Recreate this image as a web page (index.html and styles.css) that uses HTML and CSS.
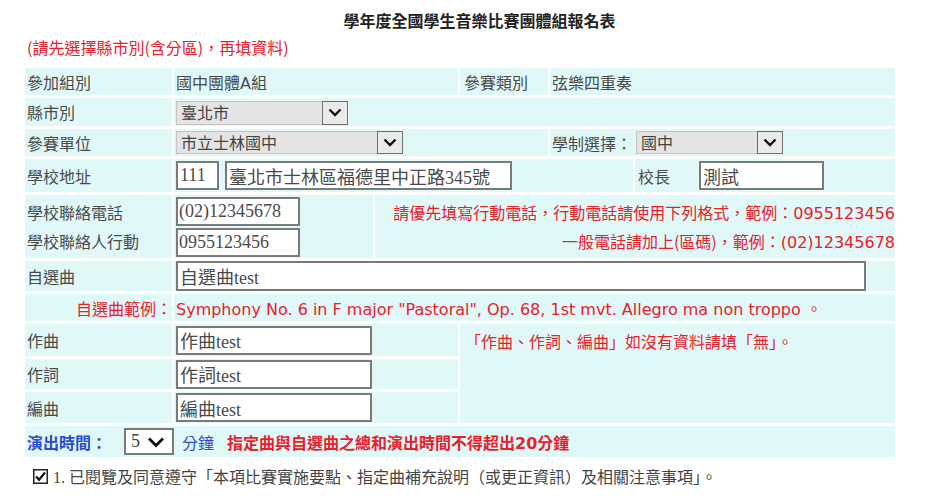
FILE: index.html
```html
<!DOCTYPE html>
<html lang="zh-Hant">
<head>
<meta charset="utf-8">
<title>學年度全國學生音樂比賽團體組報名表</title>
<link rel="stylesheet" href="styles.css">
</head>
<body>
<div class="title">學年度全國學生音樂比賽團體組報名表</div>
<div class="note">(請先選擇縣市別(含分區)，再填資料)</div>

<div class="form">
  <div class="row h27">
    <div class="cell lab">參加組別</div>
    <div class="cell w284">國中團體A組</div>
    <div class="cell w88 pl4">參賽類別</div>
    <div class="cell grow">弦樂四重奏</div>
  </div>

  <div class="row h28">
    <div class="cell lab">縣市別</div>
    <div class="cell grow">
      <span class="sel sel-city"><span class="sel-text">臺北市</span><span class="sel-btn"><svg width="14" height="9" viewBox="0 0 14 9"><path d="M1.5 1.5 L7 7 L12.5 1.5" fill="none" stroke="#111" stroke-width="2.4"/></svg></span></span>
    </div>
  </div>

  <div class="row h27">
    <div class="cell lab">參賽單位</div>
    <div class="cell w374">
      <span class="sel sel-unit"><span class="sel-text">市立士林國中</span><span class="sel-btn"><svg width="14" height="9" viewBox="0 0 14 9"><path d="M1.5 1.5 L7 7 L12.5 1.5" fill="none" stroke="#111" stroke-width="2.4"/></svg></span></span>
    </div>
    <div class="cell grow">
      <span class="lbl-sys">學制選擇：</span>
      <span class="sel sel-sys"><span class="sel-text">國中</span><span class="sel-btn"><svg width="14" height="9" viewBox="0 0 14 9"><path d="M1.5 1.5 L7 7 L12.5 1.5" fill="none" stroke="#111" stroke-width="2.4"/></svg></span></span>
    </div>
  </div>

  <div class="row h33">
    <div class="cell lab">學校地址</div>
    <div class="cell w459">
      <span class="inp inp-zip">111</span>
      <span class="inp inp-addr">臺北市士林區福德里中正路345號</span>
    </div>
    <div class="cell grow">
      <span class="lbl-head">校長</span>
      <span class="inp inp-head">測試</span>
    </div>
  </div>

  <div class="row h63">
    <div class="cell lab col">
      <span>學校聯絡電話</span>
      <span>學校聯絡人行動</span>
    </div>
    <div class="cell w199 col-inp">
      <span class="inp inp-tel">(02)12345678</span>
      <span class="inp inp-tel">0955123456</span>
    </div>
    <div class="cell grow red-tel">
      <span>請優先填寫行動電話，行動電話請使用下列格式，範例：<span class="num">0955123456</span></span>
      <span>一般電話請加上(區碼)，範例：<span class="num2">(02)12345678</span></span>
    </div>
  </div>

  <div class="row h30">
    <div class="cell lab">自選曲</div>
    <div class="cell grow">
      <span class="inp inp-song">自選曲test</span>
    </div>
  </div>

  <div class="row h27">
    <div class="cell lab red right">自選曲範例：</div>
    <div class="cell grow red sym">Symphony No. 6 in F major "Pastoral", Op. 68, 1st mvt. Allegro ma non troppo 。</div>
  </div>

  <div class="grid3">
    <div class="cell lab">作曲</div>
    <div class="cell"><span class="inp inp-short">作曲test</span></div>
    <div class="cell span3 red note3">「作曲、作詞、編曲」如沒有資料請填「無」。</div>
    <div class="cell lab">作詞</div>
    <div class="cell"><span class="inp inp-short">作詞test</span></div>
    <div class="cell lab">編曲</div>
    <div class="cell"><span class="inp inp-short">編曲test</span></div>
  </div>

  <div class="row h31">
    <div class="cell grow time">
      <span class="blue bold">演出時間：</span>
      <span class="sel5"><span class="sel5-text">5</span><svg width="18" height="12" viewBox="0 0 18 12"><path d="M2 2.5 L9 9.5 L16 2.5" fill="none" stroke="#111" stroke-width="2.8"/></svg></span>
      <span class="blue">分鐘</span>
      <span class="red bold">指定曲與自選曲之總和演出時間不得超出20分鐘</span>
    </div>
  </div>
</div>

<div class="agree">
  <span class="chk"><svg width="15" height="15" viewBox="0 0 15 15"><rect x="0.75" y="0.75" width="13.5" height="13.5" fill="#fff" stroke="#222" stroke-width="1.5"/><path d="M3 7.5 L6 10.8 L12 3.5" fill="none" stroke="#111" stroke-width="2.2"/></svg></span>
  <span>1. 已閱覽及同意遵守「本項比賽實施要點、指定曲補充說明（或更正資訊）及相關注意事項」。</span>
</div>
</body>
</html>
```

FILE: styles.css
```css
* { box-sizing: border-box; }

body {
  margin: 0;
  width: 925px;
  background: #fff;
  font-family: "DejaVu Sans", "Noto Sans CJK TC", sans-serif;
  font-size: 16px;
  color: #4a4a4a;
}

.title {
  padding-top: 9px;
  padding-left: 34px;
  height: 31px;
  line-height: 22px;
  text-align: center;
  font-weight: bold;
  font-family: "Noto Sans CJK TC", sans-serif;
  color: #222;
}

.note {
  margin-top: 5px;
  margin-left: 27px;
  height: 22px;
  line-height: 22px;
  color: #e8202a;
  font-family: "Noto Sans CJK TC", sans-serif;
  margin-bottom: 10px;
}

.form {
  margin-left: 25px;
  width: 870px;
  display: flex;
  flex-direction: column;
  gap: 3px;
}

.row {
  display: flex;
  gap: 2px;
}

.h27 { height: 27px; }
.h28 { height: 28px; }
.h30 { height: 30px; }
.h31 { height: 31px; }
.h33 { height: 33px; }
.h63 { height: 63px; }

.cell {
  background: #e0f9f8;
  display: flex;
  align-items: center;
  padding: 0 2px;
  white-space: nowrap;
}

.lab { width: 147px; flex: none; }
.w284 { width: 284px; flex: none; }
.w88 { width: 88px; flex: none; }
.w374 { width: 374px; flex: none; }
.w459 { width: 459px; flex: none; }
.w199 { width: 199px; flex: none; }
.grow { flex: 1; }
.pl4 { padding-left: 4px; }

.right { justify-content: flex-end; padding-right: 0; }

.col {
  flex-direction: column;
  align-items: flex-start;
  justify-content: center;
  gap: 5px;
}

.red { color: #e8202a; }
.blue { color: #2a4cd4; }
.bold { font-weight: bold; }

/* select look-alike */
.sel {
  display: flex;
  height: 23px;
  background: #e4e4e4;
  border: 1px solid #c4c4c4;
}
.sel-city { width: 172px; height: 24px; margin-top: 1px; }
.sel-unit { width: 227px; }
.sel-sys { width: 147px; }
.sel-text {
  flex: 1;
  padding-left: 4px;
  line-height: 21px;
  font-family: "Noto Sans CJK TC", sans-serif;
  color: #444;
}
.sel-btn {
  width: 26px;
  flex: none;
  background: #eaeaea;
  border: 1px solid #6e6e6e;
  margin: -1px -1px -1px 0;
  display: flex;
  align-items: center;
  justify-content: center;
}

.lbl-sys { margin-left: 0; margin-right: 4px; }
.lbl-head { margin-left: 1px; margin-right: 29px; }

/* input look-alike */
.inp {
  display: flex;
  align-items: center;
  height: 29px;
  background: #fff;
  border: 2px solid #7a7a7a;
  padding-left: 2px;
  font-family: "Liberation Serif", "Noto Sans CJK TC", serif;
  font-size: 18px;
  color: #4a4a4a;
}
.inp-zip { width: 43px; }
.inp-addr { width: 287px; margin-left: 6px; }
.inp-head { width: 125px; }
.inp-tel { width: 124px; height: 29px; padding-left: 1px; }
.inp-song { width: 690px; height: 30px; }
.inp-short { width: 196px; height: 29px; }

.col-inp {
  flex-direction: column;
  align-items: flex-start;
  justify-content: center;
  gap: 2px;
  padding-top: 1px;
}

.red-tel {
  flex-direction: column;
  align-items: flex-end;
  justify-content: center;
  padding-right: 0;
  gap: 5px;
  color: #e8202a;
  font-family: "Noto Sans CJK TC", sans-serif;
  font-size: 16px;
}
.num { font-family: "DejaVu Sans", sans-serif; font-size: 16px; }
.num2 { font-family: "DejaVu Sans", sans-serif; font-size: 16px; }

.sym { font-size: 16px; }

.grid3 {
  display: grid;
  grid-template-columns: 147px 284px 435px;
  grid-template-rows: 32px 30px 31px;
  gap: 3px 2px;
}
.span3 {
  grid-column: 3;
  grid-row: 1 / 4;
  align-items: flex-start;
  padding: 5px 0 0 5px;
  font-family: "Noto Sans CJK TC", sans-serif;
}

.time { gap: 0; }
.time .blue.bold { width: 97px; font-family: "Noto Sans CJK TC", sans-serif; }
.sel5 {
  display: flex;
  align-items: center;
  width: 50px;
  height: 27px;
  background: #fff;
  border: 2px solid #7a7a7a;
  padding-left: 5px;
  gap: 7px;
  margin-right: 8px;
  font-family: "Liberation Serif", serif;
  font-size: 18px;
  color: #444;
}
.time .blue:not(.bold) { margin-right: 13px; font-family: "Noto Sans CJK TC", sans-serif; }
.time .red { font-family: "DejaVu Sans", "Noto Sans CJK TC", sans-serif; }

.agree {
  margin-top: 9px;
  padding-left: 33px;
  display: flex;
  align-items: center;
  gap: 5px;
  height: 20px;
  font-family: "Liberation Serif", "Noto Sans CJK TC", serif;
  font-size: 16px;
  color: #444;
}
.chk { display: flex; }
```
